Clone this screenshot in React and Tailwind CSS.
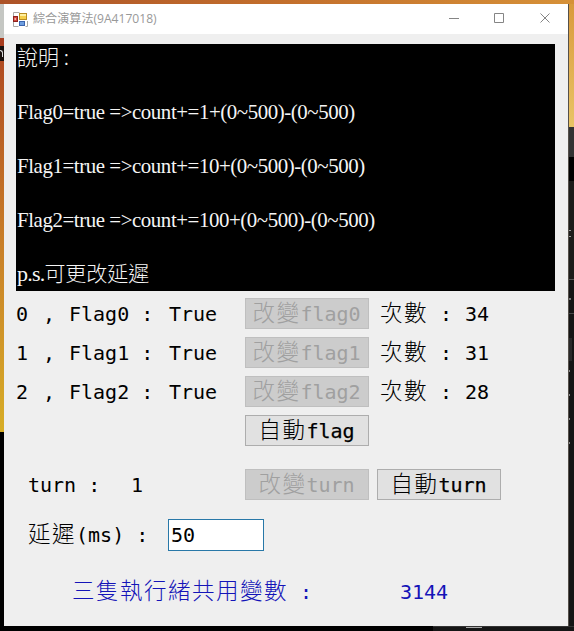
import React from "react";

const MONO = "font-['DejaVu_Sans_Mono','Noto_Sans_CJK_TC',monospace] text-[20px] leading-[31px] whitespace-pre";

// Chinese run set lighter and wider than the Latin text beside it
function Han({ children }) {
  return (
    <span className="font-['Noto_Sans_CJK_TC',sans-serif] font-light text-[22.5px] leading-[20px] tracking-[1.5px] [-webkit-text-stroke:0]">
      {children}
    </span>
  );
}

function Button({ han, label, disabled }) {
  return (
    <button
      type="button"
      disabled={disabled}
      className={
        "h-[31px] w-[124px] shrink-0 border flex items-center justify-center pr-px " +
        (disabled
          ? "bg-[#cccccc] border-[#bfbfbf] text-[#a0a0a0]"
          : "bg-[#e1e1e1] border-[#adadad] text-black [-webkit-text-stroke:0.25px]")
      }
    >
      <span className="pt-px leading-[29px]">
        <Han>{han}</Han>
        {label}
      </span>
    </button>
  );
}

function FlagRow({ index, count }) {
  return (
    <div className="flex h-[31px] items-center">
      <span className="w-[27px] pt-px">{index}</span>
      <span className="w-[26px] pt-px">,</span>
      <span className="w-[100px] pt-px">{`Flag${index} :`}</span>
      <span className="w-[76px] pt-px">True</span>
      <Button han="改變" label={`flag${index}`} disabled />
      <span className="ml-[11px] w-[85px] pt-px">
        <Han>次數</Han>
        {" :"}
      </span>
      <span className="pt-px">{count}</span>
    </div>
  );
}

function AppIcon() {
  return (
    <svg width="15" height="15" viewBox="0 0 15 15" className="shrink-0">
      <path d="M0.5 6V0.500h6M0.5 10v4.500h5M14.5 9v5.500h-2" fill="none" stroke="#aaa9a6" />
      <rect x="6.500" y="1.500" width="7" height="6" fill="#f6cf4a" stroke="#b98d22" />
      <rect x="7" y="2" width="6" height="2" fill="#fff0a0" />
      <rect x="0.500" y="4.500" width="4" height="5" fill="#d4473a" stroke="#8d2420" />
      <rect x="1.500" y="6" width="1.500" height="2" fill="#f3b0a6" />
      <rect x="6.500" y="9.500" width="5" height="4" fill="#6f9fe0" stroke="#3b64ae" />
    </svg>
  );
}

function TitleBar() {
  return (
    <div className="flex h-[30px] shrink-0 items-center bg-white pl-[9px] text-[#999999]">
      <AppIcon />
      <span className="ml-[5px] font-['Open_Sans','Noto_Sans_CJK_TC',sans-serif] text-[12.1px] leading-[16px] whitespace-nowrap">
        綜合演算法(9A417018)
      </span>
      <svg className="ml-auto mr-[17px] mb-[2px]" width="102" height="11" viewBox="0 0 102 11" fill="none" stroke="#858585">
        <path d="M0 5.5h10M45.500 .5h9v9h-9zM91.500 .5l9 9M100.500 .5l-9 9" />
      </svg>
    </div>
  );
}

// Narrow serif line: glyphs are compressed horizontally from the left edge
function Line({ children }) {
  return <div className="h-[54px] w-[539px] origin-left scale-x-[0.949]">{children}</div>;
}

function Note({ children }) {
  return (
    <span className="font-['Noto_Sans_CJK_TC',sans-serif] font-light text-[21px] tracking-normal leading-[20px]">
      {children}
    </span>
  );
}

export default function App() {
  return (
    <div className="flex h-[631px] w-[574px] flex-col overflow-hidden bg-black">
      <div className="h-[4px] shrink-0 bg-linear-to-r from-[#ad5328] via-[#c36f2c] to-[#d69138]" />
      <div className="flex h-[622px] shrink-0">
        <div className="flex w-[4px] shrink-0 flex-col">
          <div className="h-[34px] bg-[#c5c7c3]" />
          <div className="h-[8px] bg-[#a83d1f]" />
          <div className="h-[15px] bg-[#19110f] pt-1">
            <div className="h-[7px] w-[3px] rounded-tr-sm border-t border-r border-[#dddddd]" />
          </div>
          <div className="h-[371px] bg-linear-to-b from-[#b04c22] via-[#c98029] to-[#d7ad26]" />
          <div className="flex-1 bg-black" />
        </div>
        <main className={"flex w-[564px] shrink-0 flex-col bg-[#efefef] text-black " + MONO}>
          <TitleBar />
          <section className="ml-3 mt-[10px] h-[247px] w-[539px] shrink-0 bg-black pl-px text-[#f5f5f5] font-['Liberation_Serif','Noto_Sans_CJK_TC',serif] text-[22px] leading-[27px] tracking-[-0.45px]">
            <div className="h-[54px]">
              <Note>說明 :</Note>
            </div>
            <Line>{"Flag0=true =>count+=1+(0~500)-(0~500)"}</Line>
            <Line>{"Flag1=true =>count+=10+(0~500)-(0~500)"}</Line>
            <Line>{"Flag2=true =>count+=100+(0~500)-(0~500)"}</Line>
            <div>
              <span className="tracking-[-0.8px]">p.s.</span>
              <Note>可更改延遲</Note>
            </div>
          </section>
          <section className="mt-[7px] flex flex-col gap-2 pl-3">
            <FlagRow index={0} count={34} />
            <FlagRow index={1} count={31} />
            <FlagRow index={2} count={28} />
            <div className="pl-[229px]">
              <Button han="自動" label="flag" />
            </div>
          </section>
          <section className="mt-[23px] flex h-[31px] items-center pl-6">
            <span className="w-[103px] pt-px">turn :</span>
            <span className="w-[114px] pt-px">1</span>
            <Button han="改變" label="turn" disabled />
            <span className="w-2" />
            <Button han="自動" label="turn" />
          </section>
          <section className="mt-[19px] flex h-[32px] items-center pl-6">
            <span className="w-[140px]">
              <Han>延遲</Han>
              {"(ms) :"}
            </span>
            <input
              defaultValue="50"
              className="h-[32px] w-[96px] border border-[#2878a8] bg-white pl-[2px] text-[20px] outline-none"
            />
          </section>
          <section className="mt-[25px] flex h-[31px] items-center pl-[68px] pt-px text-[#1414b8]">
            <span className="w-[328px]">
              <Han>三隻執行緒共用變數</Han>
              {" :"}
            </span>
            <span>3144</span>
          </section>
        </main>
        <div className="flex w-[6px] shrink-0 flex-col border-l border-[#55504a] bg-[#151515]">
          <div className="h-[123px] bg-linear-to-b from-[#d99a3c] to-[#e9c465]" />
          <div className="h-[30px] bg-[#333333]" />
          <div className="h-[24px] bg-black" />
          <div className="h-[99px] border-b border-[#555555] bg-[#1c1c1a] pt-[49px]">
            <div className="h-[7px] w-[2px] border-y border-[#999999]" />
          </div>
          <div className="h-[34px] border-b border-[#484848] pt-[18px]">
            <div className="size-[2px] bg-[#777777]" />
          </div>
          <div className="mt-[24px] h-[23px] w-[3px] bg-[#292929]" />
          <div className="mt-[9px] flex flex-col gap-[22px]">
            <div className="h-[2px] w-px bg-[#888888]" />
            <div className="h-[2px] w-px bg-[#888888]" />
            <div className="h-[2px] w-px bg-[#888888]" />
            <div className="h-[2px] w-px bg-[#888888]" />
          </div>
        </div>
      </div>
      <div className="flex h-[5px] shrink-0">
        <div className="w-[433px] bg-black" />
        <div className="flex-1 border-t border-[#333333] bg-[#151515] pl-[33px]">
          <div className="h-px w-4 bg-[#aaaaaa]" />
        </div>
      </div>
    </div>
  );
}
